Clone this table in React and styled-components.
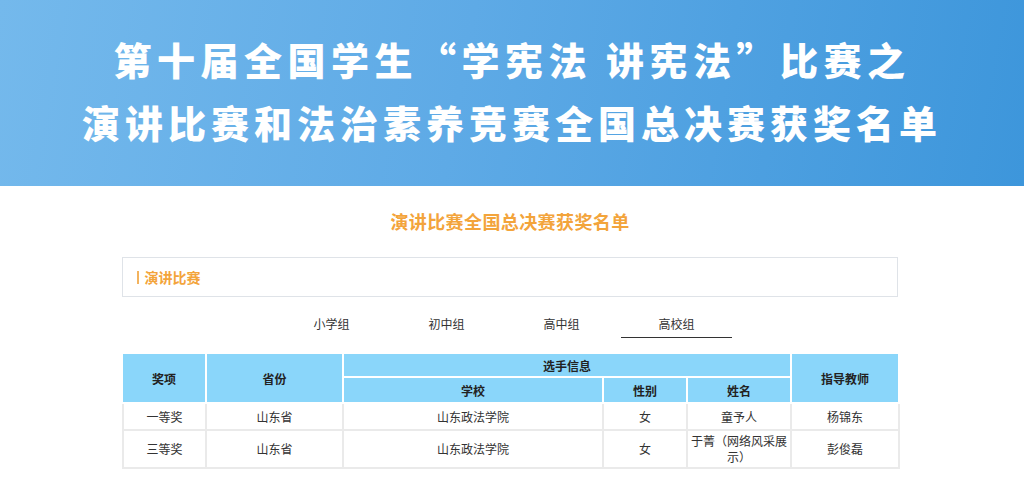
import React from "react";
import styled, { createGlobalStyle } from "styled-components";

const Global = createGlobalStyle`
  html, body { margin: 0; padding: 0; background: #fff; }
  body { font-family: "Noto Sans CJK SC", "Noto Sans", sans-serif; color: #333; }
`;

const Page = styled.div`
  width: 1024px;
`;

const Banner = styled.header`
  height: 186px;
  background: linear-gradient(100deg, #74b9ec 0%, #5eaae6 45%, #3d96db 100%);
  display: flex;
  flex-direction: column;
  align-items: center;
  justify-content: center;
  padding-bottom: 6px;
  box-sizing: border-box;
`;

const BannerLine = styled.h1`
  margin: 0;
  color: #fff;
  font-size: 38px;
  font-weight: 900;
  letter-spacing: ${(p) => p.$ls || "5px"};
  line-height: 63px;
  white-space: nowrap;
`;

const Main = styled.main`
  width: 776px;
  margin-left: 122px;
  display: flex;
  flex-direction: column;
  align-items: stretch;
`;

const SectionTitle = styled.h2`
  margin: 22px 0 0;
  text-align: center;
  font-size: 18px;
  font-weight: 700;
  letter-spacing: 0.4px;
  color: #f3a43b;
  line-height: 26px;
`;

const LabelBox = styled.div`
  margin-top: 23px;
  height: 40px;
  border: 1px solid #dfe3e8;
  box-sizing: border-box;
  display: flex;
  align-items: center;
  padding-left: 14px;
  font-size: 14px;
  font-weight: 700;
  color: #f3a43b;
`;

const Bar = styled.span`
  display: inline-block;
  width: 1.5px;
  height: 13px;
  background: #f3b35e;
  margin-right: 6px;
`;

const Tabs = styled.nav`
  display: flex;
  justify-content: center;
  margin-top: 16px;
  padding-right: 12px;
`;

const Tab = styled.div`
  width: 111px;
  margin: 0 2px;
  text-align: center;
  font-size: 12px;
  color: #333;
  line-height: 22px;
  padding-bottom: 2px;
  border-bottom: 1px solid ${(p) => (p.$active ? "#333" : "transparent")};
`;

const Table = styled.table`
  margin-top: 14px;
  width: 776px;
  border-collapse: collapse;
  table-layout: fixed;
  font-size: 12px;
  color: #333;
`;

const Th = styled.th`
  background: #8ad6fa;
  border: 2px solid #fff;
  border-left-width: ${(p) => (p.$first ? "0" : "2px")};
  font-weight: 700;
  height: ${(p) => p.$h || "22px"};
  padding: 0;
  text-align: center;
  color: #222;
`;

const Td = styled.td`
  border: 2px solid #eaeaea;
  text-align: center;
  padding: 0 2px;
  height: ${(p) => p.$h || "24px"};
  line-height: 16px;
`;

const Row = styled.tr``;

const data = [
  { prize: "一等奖", prov: "山东省", school: "山东政法学院", sex: "女", name: "童予人", teacher: "杨锦东", h: "25px" },
  { prize: "三等奖", prov: "山东省", school: "山东政法学院", sex: "女", name: "于菁（网络风采展示）", teacher: "彭俊磊", h: "36px" },
];

export default function App() {
  return (
    <Page>
      <Global />
      <Banner>
        <BannerLine $ls="5.5px">第十届全国学生“学宪法 讲宪法”比赛之</BannerLine>
        <BannerLine $ls="5px">演讲比赛和法治素养竞赛全国总决赛获奖名单</BannerLine>
      </Banner>
      <Main>
        <SectionTitle>演讲比赛全国总决赛获奖名单</SectionTitle>
        <LabelBox>
          <Bar />
          演讲比赛
        </LabelBox>
        <Tabs>
          <Tab>小学组</Tab>
          <Tab>初中组</Tab>
          <Tab>高中组</Tab>
          <Tab $active>高校组</Tab>
        </Tabs>
        <Table>
          <colgroup>
            <col style={{ width: "83px" }} />
            <col style={{ width: "137px" }} />
            <col style={{ width: "260px" }} />
            <col style={{ width: "84px" }} />
            <col style={{ width: "104px" }} />
            <col style={{ width: "108px" }} />
          </colgroup>
          <thead>
            <tr>
              <Th rowSpan={2} $first>奖项</Th>
              <Th rowSpan={2}>省份</Th>
              <Th colSpan={3} $h="22px">选手信息</Th>
              <Th rowSpan={2}>指导教师</Th>
            </tr>
            <tr>
              <Th $h="24px">学校</Th>
              <Th $h="24px">性别</Th>
              <Th $h="24px">姓名</Th>
            </tr>
          </thead>
          <tbody>
            {data.map((r) => (
              <Row key={r.prize}>
                <Td $h={r.h}>{r.prize}</Td>
                <Td $h={r.h}>{r.prov}</Td>
                <Td $h={r.h}>{r.school}</Td>
                <Td $h={r.h}>{r.sex}</Td>
                <Td $h={r.h}>{r.name}</Td>
                <Td $h={r.h}>{r.teacher}</Td>
              </Row>
            ))}
          </tbody>
        </Table>
      </Main>
    </Page>
  );
}
